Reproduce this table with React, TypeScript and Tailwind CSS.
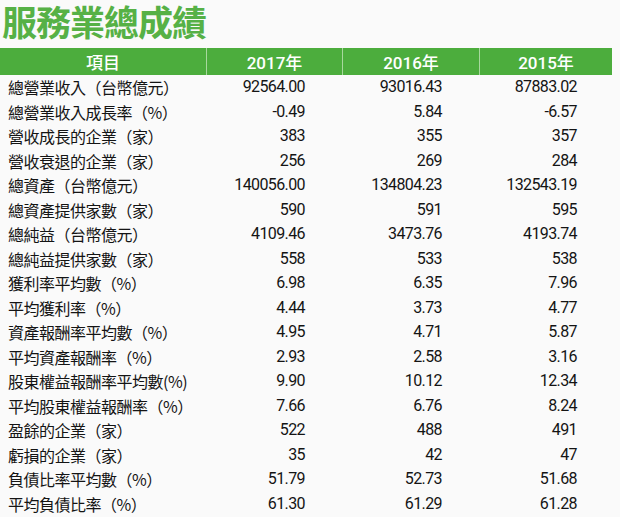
import React from 'react';

interface Row {
  label: string;
  values: [string, string, string];
}

const rows: Row[] = [
  { label: '總營業收入（台幣億元）', values: ['92564.00', '93016.43', '87883.02'] },
  { label: '總營業收入成長率（%）', values: ['-0.49', '5.84', '-6.57'] },
  { label: '營收成長的企業（家）', values: ['383', '355', '357'] },
  { label: '營收衰退的企業（家）', values: ['256', '269', '284'] },
  { label: '總資產（台幣億元）', values: ['140056.00', '134804.23', '132543.19'] },
  { label: '總資產提供家數（家）', values: ['590', '591', '595'] },
  { label: '總純益（台幣億元）', values: ['4109.46', '3473.76', '4193.74'] },
  { label: '總純益提供家數（家）', values: ['558', '533', '538'] },
  { label: '獲利率平均數（%）', values: ['6.98', '6.35', '7.96'] },
  { label: '平均獲利率（%）', values: ['4.44', '3.73', '4.77'] },
  { label: '資產報酬率平均數（%）', values: ['4.95', '4.71', '5.87'] },
  { label: '平均資產報酬率（%）', values: ['2.93', '2.58', '3.16'] },
  { label: '股東權益報酬率平均數(%)', values: ['9.90', '10.12', '12.34'] },
  { label: '平均股東權益報酬率（%）', values: ['7.66', '6.76', '8.24'] },
  { label: '盈餘的企業（家）', values: ['522', '488', '491'] },
  { label: '虧損的企業（家）', values: ['35', '42', '47'] },
  { label: '負債比率平均數（%）', values: ['51.79', '52.73', '51.68'] },
  { label: '平均負債比率（%）', values: ['61.30', '61.29', '61.28'] },
];

const years = ['2017年', '2016年', '2015年'];
const colWidths = ['w-[136px]', 'w-[137px]', 'w-[132px]'];

const cjk = { fontFamily: '"Noto Sans CJK TC", "Noto Sans", sans-serif' };
const num = { fontFamily: 'Roboto, "Noto Sans", sans-serif' };

const App = () => {
  return (
    <div className="w-[620px] h-[517px] overflow-hidden bg-[#fafafa] text-[#141414]" style={cjk}>
      <div className="h-[48px] pl-[2px]">
        <h1 className="text-[35px] leading-[42px] font-bold text-[#56b146] tracking-[-1px] whitespace-nowrap">
          服務業總成績
        </h1>
      </div>

      <div className="w-[612px]">
        <div className="flex h-[27px] bg-[#4cad3d] text-white text-[17px] font-medium leading-[27px]">
          <div className="w-[207px] text-center border-r border-[#a8d89e]">項目</div>
          {years.map((y, i) => (
            <div
              key={y}
              className={`${colWidths[i]} text-center ${i < 2 ? 'border-r border-[#a8d89e]' : ''}`}
            >
              <span style={num}>{y.slice(0, 4)}</span>
              {y.slice(4)}
            </div>
          ))}
        </div>

        {rows.map((row) => (
          <div key={row.label} className="flex h-[24.5px] items-center text-[16px]">
            <div className="w-[207px] pl-[8px] whitespace-nowrap tracking-[-0.5px]">{row.label}</div>
            {row.values.map((v, i) => (
              <div
                key={i}
                className={`${colWidths[i]} text-right ${i === 2 ? 'pr-[35px]' : 'pr-[38px]'} tracking-[-0.6px]`}
                style={num}
              >
                {v}
              </div>
            ))}
          </div>
        ))}
      </div>
    </div>
  );
};

export default App;
